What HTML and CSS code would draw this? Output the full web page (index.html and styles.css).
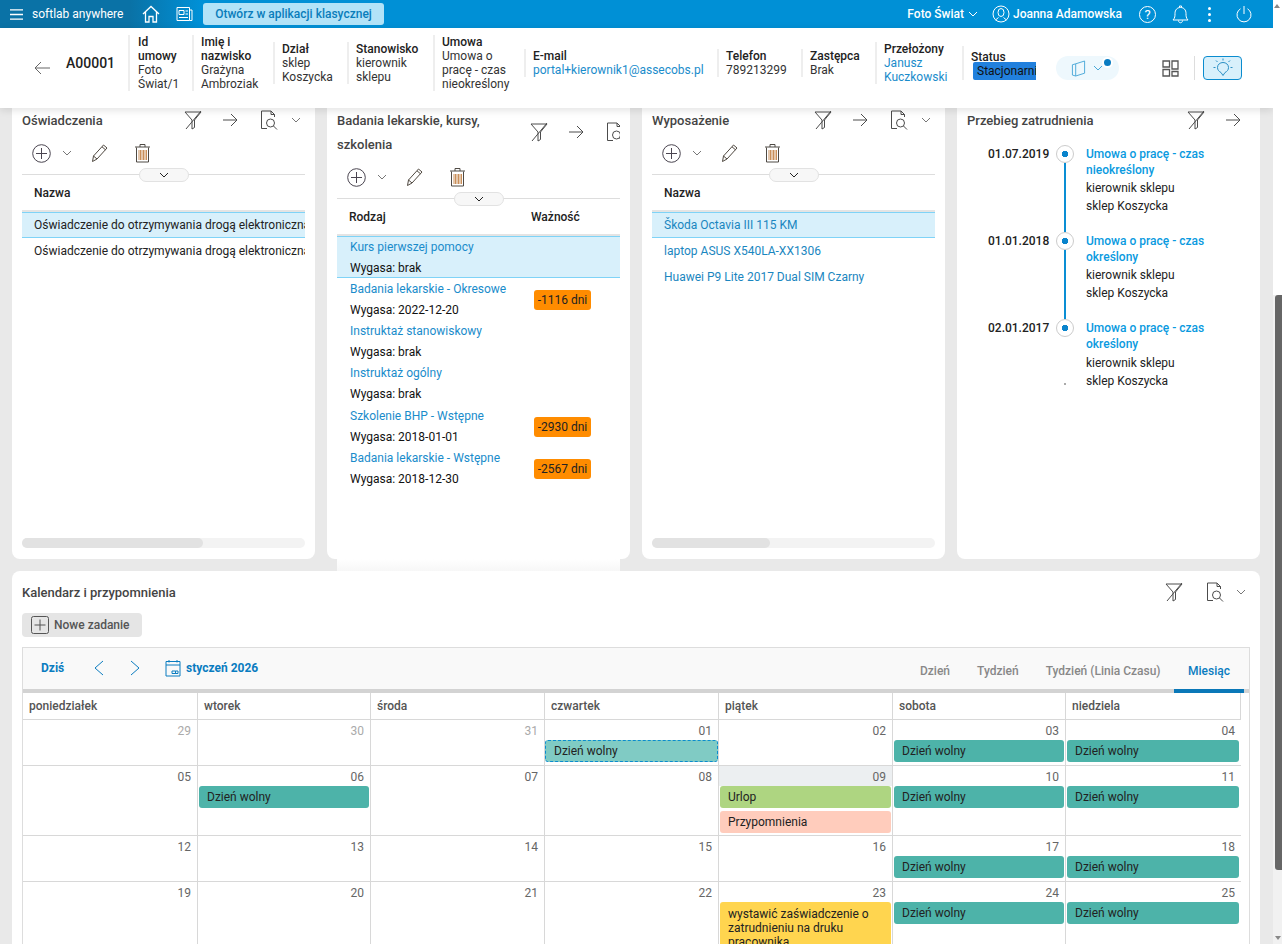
FILE: index.html
```html
<!DOCTYPE html>
<html lang="pl">
<head>
<meta charset="utf-8">
<title>Softlab anywhere</title>
<link rel="stylesheet" href="styles.css">
</head>
<body>
<svg class="defs" aria-hidden="true">
  <symbol id="i-filter" viewBox="0 0 18 20"><path d="M1 2H17L10.5 10V17.5L8 19V10Z"/><path d="M17 1L2 19"/></symbol>
  <symbol id="i-arrow" viewBox="0 0 16 16"><path d="M1 8H15M9 2L15 8L9 14"/></symbol>
  <symbol id="i-doc" viewBox="0 0 18 20"><path d="M11 1H1.500V18.500H7M11 1L14.500 4.500V7M11 1V4.500H14.500"/><circle cx="10.500" cy="13" r="4"/><path d="M13.500 16L17 19.500"/></symbol>
  <symbol id="i-chev" viewBox="0 0 10 6"><path d="M1 1L5 5L9 1"/></symbol>
  <symbol id="i-plus" viewBox="0 0 19 19"><circle cx="9.500" cy="9.500" r="8.800"/><path d="M9.500 4V15M4 9.500H15"/></symbol>
  <symbol id="i-pencil" viewBox="0 0 18 20"><path d="M1.500 18.500L2.500 13L12.500 2L16 5L6 16ZM2.500 13L6 16M11 3.800L14.500 6.800"/></symbol>
  <symbol id="i-trash" viewBox="0 0 17 20"><path d="M1 4H16M6 4V1.500H11V4M2.500 4.500V19H14.500V4.500"/><path class="stripes" d="M5 7V17M6.500 7V17M8 7V17M9.500 7V17M11 7V17M12.500 7V17"/></symbol>
</svg>

<div class="shell">
  <div class="page">
    <header class="topbar">
      <svg class="tb-menu" viewBox="0 0 14 13"><path d="M0 1.500H14M0 6.500H14M0 11.500H14"/></svg>
      <span class="brand">softlab anywhere</span>
      <svg class="tb-home" viewBox="0 0 18 18"><path d="M1 9L9 1.500L17 9M3.500 7V17H7V11.500H11V17H14.500V7"/></svg>
      <svg class="tb-news" viewBox="0 0 17 16"><path d="M1 1.500H13.500V14.500H1ZM13.500 4H16V14.500H13.500M3 4.500H8V8.500H3ZM9.500 5H12M9.500 8H12M3 11.500H12"/></svg>
      <button class="classic">Otwórz w aplikacji klasycznej</button>
      <div class="tb-right">
        <span class="tb-org">Foto Świat</span>
        <svg class="tb-chev"><use href="#i-chev"/></svg>
        <svg class="tb-user" viewBox="0 0 18 18"><circle cx="9" cy="9" r="8"/><ellipse cx="9" cy="7.500" rx="3" ry="4"/><path d="M3.500 15L6.500 12.500M14.500 15L11.500 12.500"/></svg>
        <span class="tb-name">Joanna Adamowska</span>
        <span class="tb-help">?</span>
        <svg class="tb-bell" viewBox="0 0 17 19"><path d="M1 15C3 13 3 11 3 8.500C3 5 5 2.500 8.500 2.500C12 2.500 14 5 14 8.500C14 11 14 13 16 15ZM7.500 2.500V1H9.500V2.500M6.500 15.500C6.500 18.500 10.500 18.500 10.500 15.500"/></svg>
        <span class="tb-dots"><i></i><i></i><i></i></span>
        <svg class="tb-power" viewBox="0 0 16 18"><path d="M8 1V9M4.500 3.800A7 7 0 1 0 11.500 3.800"/></svg>
      </div>
    </header>

    <section class="head">
      <svg class="back" viewBox="0 0 16 14"><path d="M16 7H1M7 1L1 7L7 13"/></svg>
      <strong class="code">A00001</strong>
      <div class="meta">
        <div class="cell cell-id"><b>Id umowy</b>Foto Świat/1</div>
        <div class="cell"><b>Imię i nazwisko</b>Grażyna Ambroziak</div>
        <div class="cell"><b>Dział</b>sklep Koszycka</div>
        <div class="cell"><b>Stanowisko</b>kierownik sklepu</div>
        <div class="cell"><b>Umowa</b>Umowa o pracę - czas nieokreślony</div>
        <div class="cell"><b>E-mail</b><span class="link">portal+kierownik1@assecobs.pl</span></div>
        <div class="cell"><b>Telefon</b>789213299</div>
        <div class="cell"><b>Zastępca</b>Brak</div>
        <div class="cell"><b>Przełożony</b><span class="link">Janusz Kuczkowski</span></div>
        <div class="cell cell-status"><b>Status</b><span class="tag">Stacjonarnie</span></div>
      </div>
      <div class="pill">
        <svg class="pill-book" viewBox="0 0 16 18"><path d="M5 4L14.500 1V14L5 17ZM5 4L1.500 5V16L5 17"/></svg>
        <svg class="pill-chev"><use href="#i-chev"/></svg>
        <span class="pill-dot"></span>
      </div>
      <svg class="layout" viewBox="0 0 17 17"><path d="M1 1H7.500V7H1ZM10 1H16V9H10ZM1 9.500H7.500V16H1ZM10 11.500H16V16H10Z"/></svg>
      <span class="head-sep"></span>
      <button class="tip">
        <svg viewBox="0 0 24 20"><path d="M12 17.500L10 14.500C8 13.500 6.500 12 6.500 9.500C6.500 6.500 9 4.500 12 4.500C15 4.500 17.500 6.500 17.500 9.500C17.500 12 16 13.500 14 14.500ZM12 0.500V2.500M4.500 9.500H2.500M21.500 9.500H19.500M6.500 4L5 2.500M17.500 4L19 2.500"/></svg>
      </button>
    </section>

    <section class="cards">
      <article class="card">
        <div class="card-in">
          <div class="c-head">
            <h2 class="title">Oświadczenia</h2>
            <svg class="ic ic-filter"><use href="#i-filter"/></svg>
            <svg class="ic ic-arrow"><use href="#i-arrow"/></svg>
            <svg class="ic ic-doc"><use href="#i-doc"/></svg>
            <svg class="ic ic-chev"><use href="#i-chev"/></svg>
          </div>
          <div class="tools">
            <svg class="ic ic-plus"><use href="#i-plus"/></svg>
            <svg class="ic ic-chev tool-chev"><use href="#i-chev"/></svg>
            <svg class="ic ic-pencil"><use href="#i-pencil"/></svg>
            <svg class="ic ic-trash"><use href="#i-trash"/></svg>
          </div>
          <div class="fold"><span class="fold-btn"><svg class="fold-chev"><use href="#i-chev"/></svg></span></div>
          <div class="t-head">Nazwa</div>
          <div class="row row-sel">Oświadczenie do otrzymywania drogą elektroniczną</div>
          <div class="row">Oświadczenie do otrzymywania drogą elektroniczną</div>
        </div>
        <div class="hbar"><span class="hthumb"></span></div>
      </article>

      <article class="card">
        <div class="card-in-spill">
          <div class="c-head c-head-tall">
            <h2 class="title title-wide">Badania lekarskie, kursy, szkolenia</h2>
            <svg class="ic ic-filter"><use href="#i-filter"/></svg>
            <svg class="ic ic-arrow"><use href="#i-arrow"/></svg>
            <svg class="ic ic-doc"><use href="#i-doc"/></svg>
            <svg class="ic ic-chev"><use href="#i-chev"/></svg>
          </div>
          <div class="tools">
            <svg class="ic ic-plus"><use href="#i-plus"/></svg>
            <svg class="ic ic-chev tool-chev"><use href="#i-chev"/></svg>
            <svg class="ic ic-pencil"><use href="#i-pencil"/></svg>
            <svg class="ic ic-trash"><use href="#i-trash"/></svg>
          </div>
          <div class="fold"><span class="fold-btn"><svg class="fold-chev"><use href="#i-chev"/></svg></span></div>
          <div class="t-head t-head-two"><span>Rodzaj</span><span>Ważność</span></div>
          <div class="exam exam-sel"><div><a>Kurs pierwszej pomocy</a><p>Wygasa: brak</p></div></div>
          <div class="exam"><div><a>Badania lekarskie - Okresowe</a><p>Wygasa: 2022-12-20</p></div><span class="badge">-1116 dni</span></div>
          <div class="exam"><div><a>Instruktaż stanowiskowy</a><p>Wygasa: brak</p></div></div>
          <div class="exam"><div><a>Instruktaż ogólny</a><p>Wygasa: brak</p></div></div>
          <div class="exam"><div><a>Szkolenie BHP - Wstępne</a><p>Wygasa: 2018-01-01</p></div><span class="badge">-2930 dni</span></div>
          <div class="exam"><div><a>Badania lekarskie - Wstępne</a><p>Wygasa: 2018-12-30</p></div><span class="badge">-2567 dni</span></div>
        </div>
      </article>

      <article class="card">
        <div class="card-in">
          <div class="c-head">
            <h2 class="title">Wyposażenie</h2>
            <svg class="ic ic-filter"><use href="#i-filter"/></svg>
            <svg class="ic ic-arrow"><use href="#i-arrow"/></svg>
            <svg class="ic ic-doc"><use href="#i-doc"/></svg>
            <svg class="ic ic-chev"><use href="#i-chev"/></svg>
          </div>
          <div class="tools">
            <svg class="ic ic-plus"><use href="#i-plus"/></svg>
            <svg class="ic ic-chev tool-chev"><use href="#i-chev"/></svg>
            <svg class="ic ic-pencil"><use href="#i-pencil"/></svg>
            <svg class="ic ic-trash"><use href="#i-trash"/></svg>
          </div>
          <div class="fold"><span class="fold-btn"><svg class="fold-chev"><use href="#i-chev"/></svg></span></div>
          <div class="t-head">Nazwa</div>
          <div class="row row-sel row-link">Škoda Octavia III 115 KM</div>
          <div class="row row-link">laptop ASUS X540LA-XX1306</div>
          <div class="row row-link">Huawei P9 Lite 2017 Dual SIM Czarny</div>
        </div>
        <div class="hbar"><span class="hthumb hthumb-short"></span></div>
      </article>

      <article class="card">
        <div class="card-in">
          <div class="c-head">
            <h2 class="title title-full">Przebieg zatrudnienia</h2>
            <svg class="ic ic-filter"><use href="#i-filter"/></svg>
            <svg class="ic ic-arrow"><use href="#i-arrow"/></svg>
          </div>
          <div class="timeline">
            <div class="tl">
              <span class="tl-date">01.07.2019</span>
              <div class="tl-node"><span class="tl-circle"></span><span class="tl-line"></span></div>
              <div class="tl-text"><a>Umowa o pracę - czas nieokreślony</a><p>kierownik sklepu</p><p>sklep Koszycka</p></div>
            </div>
            <div class="tl">
              <span class="tl-date">01.01.2018</span>
              <div class="tl-node"><span class="tl-circle"></span><span class="tl-line"></span></div>
              <div class="tl-text"><a>Umowa o pracę - czas określony</a><p>kierownik sklepu</p><p>sklep Koszycka</p></div>
            </div>
            <div class="tl">
              <span class="tl-date">02.01.2017</span>
              <div class="tl-node"><span class="tl-circle"></span><span class="tl-end"></span></div>
              <div class="tl-text"><a>Umowa o pracę - czas określony</a><p>kierownik sklepu</p><p>sklep Koszycka</p></div>
            </div>
          </div>
        </div>
      </article>
    </section>

    <section class="calendar">
      <div class="cal-head">
        <h2 class="cal-title">Kalendarz i przypomnienia</h2>
        <svg class="ic ic-filter"><use href="#i-filter"/></svg>
        <svg class="ic ic-doc cal-doc"><use href="#i-doc"/></svg>
        <svg class="ic ic-chev"><use href="#i-chev"/></svg>
      </div>
      <button class="new-task">
        <svg viewBox="0 0 18 18"><rect x="0.500" y="0.500" width="17" height="17" rx="2"/><path d="M9 3.500V14.500M3.500 9H14.500"/></svg>
        Nowe zadanie
      </button>
      <div class="sched">
        <div class="sched-bar">
          <span class="today">Dziś</span>
          <svg class="nav nav-prev" viewBox="0 0 10 16"><path d="M9 1L1 8L9 15"/></svg>
          <svg class="nav nav-next" viewBox="0 0 10 16"><path d="M1 1L9 8L1 15"/></svg>
          <svg class="cal-ico" viewBox="0 0 16 18"><path d="M1 2.500H15V17H1ZM1 6H15M4 1V3.500M12 1V3.500"/><path d="M7 12H10.500V14.500H7ZM10.500 12H13V14.500H10.500Z"/></svg>
          <span class="month">styczeń 2026</span>
          <nav class="tabs">
            <span class="tab">Dzień</span>
            <span class="tab">Tydzień</span>
            <span class="tab">Tydzień (Linia Czasu)</span>
            <span class="tab tab-on">Miesiąc</span>
          </nav>
        </div>
        <div class="grid">
          <div class="dow">poniedziałek</div><div class="dow">wtorek</div><div class="dow">środa</div><div class="dow">czwartek</div><div class="dow">piątek</div><div class="dow">sobota</div><div class="dow">niedziela</div>

          <div class="day"><div class="num num-off">29</div></div>
          <div class="day"><div class="num num-off">30</div></div>
          <div class="day"><div class="num num-off">31</div></div>
          <div class="day"><div class="num">01</div><div class="ev ev-dash">Dzień wolny</div></div>
          <div class="day"><div class="num">02</div></div>
          <div class="day"><div class="num">03</div><div class="ev ev-free">Dzień wolny</div></div>
          <div class="day day-last"><div class="num">04</div><div class="ev ev-free">Dzień wolny</div></div>

          <div class="day"><div class="num">05</div></div>
          <div class="day"><div class="num">06</div><div class="ev ev-free">Dzień wolny</div></div>
          <div class="day"><div class="num">07</div></div>
          <div class="day"><div class="num">08</div></div>
          <div class="day"><div class="num num-today">09</div><div class="ev ev-leave">Urlop</div><div class="ev ev-rem">Przypomnienia</div></div>
          <div class="day"><div class="num">10</div><div class="ev ev-free">Dzień wolny</div></div>
          <div class="day day-last"><div class="num">11</div><div class="ev ev-free">Dzień wolny</div></div>

          <div class="day"><div class="num">12</div></div>
          <div class="day"><div class="num">13</div></div>
          <div class="day"><div class="num">14</div></div>
          <div class="day"><div class="num">15</div></div>
          <div class="day"><div class="num">16</div></div>
          <div class="day"><div class="num">17</div><div class="ev ev-free">Dzień wolny</div></div>
          <div class="day day-last"><div class="num">18</div><div class="ev ev-free">Dzień wolny</div></div>

          <div class="day"><div class="num">19</div></div>
          <div class="day"><div class="num">20</div></div>
          <div class="day"><div class="num">21</div></div>
          <div class="day"><div class="num">22</div></div>
          <div class="day"><div class="num">23</div><div class="ev ev-task">wystawić zaświadczenie o zatrudnieniu na druku pracownika</div></div>
          <div class="day"><div class="num">24</div><div class="ev ev-free">Dzień wolny</div></div>
          <div class="day day-last"><div class="num">25</div><div class="ev ev-free">Dzień wolny</div></div>
        </div>
      </div>
    </section>
  </div>

  <aside class="vbar">
    <span class="vbar-up"></span>
    <span class="vbar-thumb"></span>
    <span class="vbar-down"></span>
  </aside>
</div>
</body>
</html>
```

FILE: styles.css
```css
* { box-sizing: border-box; }
html, body { margin: 0; height: 944px; overflow: hidden; }
body { font: 12px/14px Roboto, "Liberation Sans", sans-serif; color: #222; background: #e9e9e9; }
h2, p { margin: 0; font-weight: 400; }
svg { fill: none; stroke: currentColor; stroke-width: 1; display: block; flex: none; overflow: visible; }
.defs { width: 0; height: 0; position: absolute; }
button { font: inherit; border: 0; padding: 0; }

.shell { display: flex; height: 944px; }
.page { width: 1273px; flex: none; height: 944px; overflow: hidden; }

/* scrollbar */
.vbar { flex: 1; background: #f1f1f1; display: flex; flex-direction: column; align-items: flex-end; }
.vbar-up { height: 295px; width: 100%; background: #fff; }
.vbar-up::before { content: ""; display: block; width: 0; height: 0; margin: 4px 0 0 1px; border: 3.500px solid transparent; border-top: 0; border-bottom: 4px solid #888; }
.vbar-thumb { width: 7px; height: 575px; background: #666; border-radius: 3px 0 0 3px; }
.vbar-down { flex: 1; width: 100%; display: flex; }
.vbar-down::before { content: ""; width: 0; height: 0; margin: 66px 0 0 2px; border: 3.500px solid transparent; border-bottom: 0; border-top: 4px solid #888; }

/* top bar */
.topbar { height: 28px; display: flex; align-items: center; color: #fff; background: linear-gradient(90deg, #0a72a6 0, #0a72a6 130px, #0090d6 200px, #0090d6 100%); }
.tb-menu { width: 13px; height: 13px; margin-left: 10px; stroke-width: 1.400; }
.brand { margin-left: 9px; width: 110px; font-size: 12px; }
.tb-home { width: 18px; height: 18px; stroke-width: 1.300; }
.tb-news { width: 17px; height: 16px; margin-left: 16px; }
.classic { margin-left: 10px; width: 181px; height: 22px; border-radius: 3px; background: #b2e3f8; color: #0a7dbb; font-weight: 500; font-size: 12px; }
.tb-right { margin-left: auto; display: flex; align-items: center; padding-right: 21px; font-weight: 500; }
.tb-org { font-weight: 500; }
.tb-chev { width: 10px; height: 6px; margin-left: 4px; }
.tb-user { width: 18px; height: 18px; margin-left: 14px; }
.tb-name { margin-left: 3px; }
.tb-help { width: 17px; height: 17px; margin-left: 17px; border: 1.300px solid #fff; border-radius: 50%; font-size: 13px; line-height: 15px; font-weight: 400; text-align: center; }
.tb-bell { width: 17px; height: 19px; margin-left: 16px; }
.tb-dots { display: flex; flex-direction: column; gap: 3px; margin: 0 25px 0 19px; }
.tb-dots i { width: 3px; height: 3px; border-radius: 50%; background: #fff; }
.tb-power { width: 16px; height: 18px; }

/* record header */
.head { height: 80px; background: #fff; display: flex; align-items: center; padding-left: 34px; box-shadow: 0 2px 8px rgba(0,0,0,.12); position: relative; z-index: 2; }
.back { width: 16px; height: 14px; color: #666; }
.code { margin: 0 0 10px 16px; width: 62px; font-size: 14px; font-weight: 500; color: #222; }
.meta { display: grid; grid-template-columns: 64px 81px 74px 86px 91px 193px 84px 74px 87px 94px; align-items: center; margin-bottom: 10px; }
.cell { border-left: 2px solid #eee; padding: 0 8px 0 7px; line-height: 14px; color: #333; }
.cell b { display: block; font-weight: 500; color: #222; }
.cell-id { padding: 0 14px 0 8px; }
.link { color: #1a8ccb; }
.cell-status { padding: 4px 0 0 7px; }
.tag { display: block; width: 63px; height: 18px; margin: -2px 0 0 2px; padding-left: 4px; background: #2180dd; border-radius: 2px 0 0 2px; color: #111; line-height: 19px; white-space: nowrap; overflow: hidden; }
.pill { width: 63px; height: 24px; border-radius: 12px; background: #eef8fd; display: flex; align-items: center; padding-left: 15px; position: relative; color: #4aa8d8; }
.pill-book { width: 15px; height: 17px; }
.pill-chev { width: 10px; height: 6px; margin-left: 7px; }
.pill-dot { position: absolute; right: 6px; top: 1px; width: 11px; height: 11px; border-radius: 50%; background: #0a7cc2; border: 2px solid #fff; }
.layout { width: 17px; height: 17px; margin-left: 43px; color: #555; stroke-width: 1.300; }
.head-sep { width: 1px; height: 24px; background: #ddd; margin: 0 8px 0 15px; }
.tip { width: 39px; height: 24px; border: 1px solid #0a8ccf; border-radius: 4px; background: #d8f0fb; color: #2a8fc4; display: flex; align-items: center; justify-content: center; }
.tip svg { width: 24px; height: 20px; }

/* cards */
.cards { display: grid; grid-template-columns: repeat(4, 303px); gap: 12px; padding: 0 12px; height: 451px; }
.card { background: #fff; border-radius: 0 0 8px 8px; display: flex; flex-direction: column; min-height: 0; }
.card-in { flex: 1; padding: 0 10px; overflow: hidden; min-height: 0; }
.card-in-spill { flex: none; height: 463px; margin: 0 10px; overflow: hidden; background: linear-gradient(#fff 451px, #f7f7f7 100%); }
.c-head { height: 24px; display: flex; align-items: center; color: #666; white-space: nowrap; }
.c-head-tall { height: 48px; }
.title { flex: none; width: 162px; padding-top: 2px; font-size: 13px; line-height: 24px; color: #444; font-weight: 500; white-space: normal; }
.title-wide { width: 193px; }
.title-full { width: 220px; }
.ic { color: #4c4c4c; }
.ic-filter { width: 18px; height: 20px; }
.ic-arrow { width: 16px; height: 16px; margin-left: 20px; }
.ic-doc { width: 18px; height: 20px; margin-left: 22px; }
.ic-chev { width: 10px; height: 6px; margin-left: 13px; color: #777; }
.tools { height: 42px; display: flex; align-items: center; padding-left: 10px; }
.ic-plus { width: 19px; height: 19px; color: #4a4550; }
.tool-chev { margin-left: 11px; }
.ic-pencil { width: 18px; height: 20px; margin-left: 19px; color: #4f4840; }
.ic-trash { width: 17px; height: 20px; margin-left: 25px; color: #4f4a44; }
.stripes { stroke: #c98f5a; }
.fold { height: 1px; margin-bottom: 1px; background: #ddd; display: flex; justify-content: center; align-items: center; }
.fold-btn { width: 50px; height: 14px; border: 1px solid #e2e2e2; border-radius: 7px; background: #f7f7f7; display: flex; align-items: center; justify-content: center; flex: none; }
.fold-chev { width: 12px; height: 6px; color: #222; }
.t-head { display: flex; align-items: center; padding-left: 12px; font-weight: 500; color: #222; border-bottom: 2px solid #e4e4e4; height: 36px; }
.t-head-two span:first-child { width: 182px; }
.row { height: 26px; padding-left: 12px; line-height: 26px; white-space: nowrap; overflow: hidden; }
.row-sel { line-height: 25px; background: #d8f0fb; border-top: 1px solid #7fd3f7; border-bottom: 1px solid #7fd3f7; }
.row-link { color: #1a86c0; }
.exam { height: 42.400px; display: grid; grid-template-columns: 197px 57px; align-items: center; }
.exam div { padding-left: 13px; }
.exam a { display: block; line-height: 21px; color: #1a8ccb; }
.exam p { line-height: 21px; color: #111; }
.exam-sel { background: #d8f0fb; border-top: 1px solid #7fd3f7; border-bottom: 1px solid #7fd3f7; }
.exam-sel div { padding-bottom: 1px; }
.badge { height: 20px; border-radius: 3px; background: #ff8c00; line-height: 20px; text-align: center; color: #222; font-size: 12px; white-space: nowrap; }
.hbar { height: 10px; margin: 0 10px 11px; border-radius: 5px; background: #f3f3f3; flex: none; }
.hthumb { display: block; width: 181px; height: 10px; border-radius: 5px; background: #e2e2e2; }
.hthumb-short { width: 118px; }

/* timeline */
.timeline { padding: 13px 0 0 21px; }
.tl { display: flex; height: 87px; }
.tl-date { width: 62px; font-weight: 500; color: #222; line-height: 18px; }
.tl-node { width: 18px; margin: 0 12px 0 6px; display: flex; flex-direction: column; align-items: center; }
.tl-circle { width: 18px; height: 18px; flex: none; border-radius: 50%; border: 1px solid #ccc; background: radial-gradient(circle, #0a84cc 0 3px, #fff 3.500px); }
.tl-line { flex: 1; width: 2px; background: #0a8ed4; }
.tl-end { width: 2px; height: 2px; margin-top: 46px; background: #aaa; }
.tl-text { width: 130px; padding-top: 1px; }
.tl-text a { display: block; font-weight: 500; line-height: 16px; color: #0a9ae0; margin-bottom: 1px; }
.tl:last-child a { margin-bottom: 2px; }
.tl-text p { line-height: 18px; color: #222; }

/* calendar */
.calendar { margin: 12px 13px 0 12px; height: 400px; background: #fff; border-radius: 8px 8px 0 0; padding: 0 10px; overflow: hidden; }
.cal-head { height: 42px; display: flex; align-items: center; padding-right: 4px; }
.cal-title { flex: 1; padding-top: 2px; font-size: 13px; font-weight: 500; color: #444; }
.cal-doc { margin-left: 23px; }
.cal-head .ic-chev { margin-left: 12px; }
.new-task { display: flex; align-items: center; width: 120px; height: 24px; background: #e5e5e5; border-radius: 4px; padding-left: 9px; color: #555; font-weight: 500; }
.new-task svg { width: 18px; height: 18px; margin-right: 5px; color: #555; }
.sched { margin-top: 10px; border: 1px solid #ddd; border-bottom: 0; height: 400px; }
.sched-bar { height: 45px; background: #f9f9f9; border-bottom: 4px solid #d3d3d3; display: flex; align-items: center; color: #0a7cc0; padding: 0 5px 2px 18px; font-weight: 700; }
.today { width: 53px; }
.nav { width: 10px; height: 16px; }
.nav-next { margin-left: 26px; }
.cal-ico { width: 16px; height: 18px; margin-left: 25px; }
.month { margin-left: 5px; }
.tabs { margin-left: auto; display: flex; align-self: flex-end; height: 40px; margin-bottom: -6px; }
.tab { padding: 2px 13.500px 0; color: #888; font-weight: 500; line-height: 32px; height: 40px; }
.tab-on { color: #0a7cc0; border-bottom: 4px solid #0a78b8; padding: 2px 14px 0; }
.grid { display: grid; grid-template-columns: 175px 173px 174px 174px 174px 173px 175px; grid-template-rows: 27px 46px 70px 46px 120px; }
.dow { border-right: 1px solid #d8d8d8; border-bottom: 1px solid #d8d8d8; padding-left: 6px; line-height: 27px; font-weight: 500; color: #555; }
.day { border-right: 1px solid #d8d8d8; border-bottom: 1px solid #d8d8d8; }
.day-last { border-right: 0; }
.num { height: 20px; padding-right: 6px; text-align: right; line-height: 22px; color: #666; }
.num-off { color: #aaa; }
.num-today { background: #eceff1; }
.ev { height: 22px; margin: 0 1px 3px 1px; padding: 0 8px; line-height: 23px; border-radius: 3px; color: #222; }
.day-last .ev { margin-right: 2px; }
.ev-free { background: #4db3a9; }
.ev-dash { margin: 0; background: #80cbc4; border: 1px dashed #0a8ccf; padding-left: 8px; line-height: 21px; }
.ev-leave { background: #aed581; }
.ev-rem { background: #ffccbc; margin-bottom: 0; }
.ev-task { background: #ffd54f; height: 60px; line-height: 14px; padding-top: 5px; }
```
